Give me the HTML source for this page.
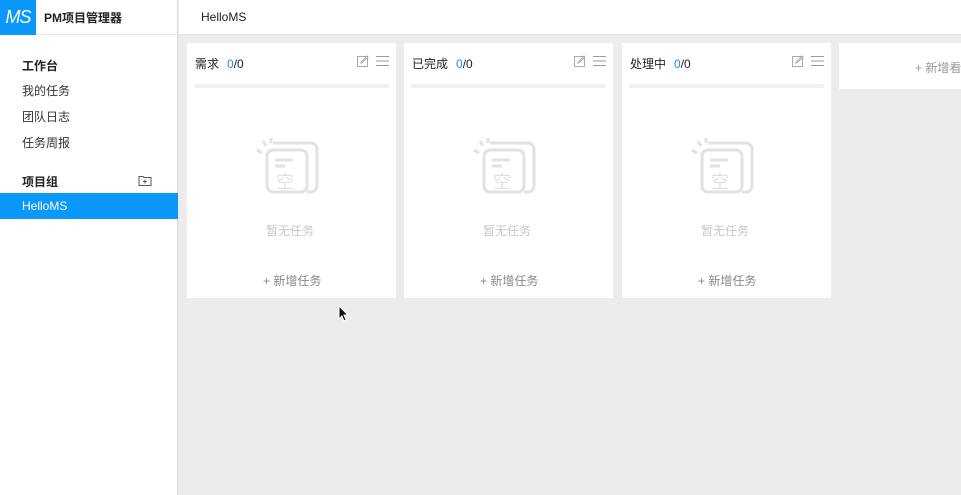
<!DOCTYPE html><html><head><meta charset="utf-8"><style>
*{margin:0;padding:0;box-sizing:border-box}
body{width:961px;height:495px;overflow:hidden;font-family:"Liberation Sans","Noto Sans CJK SC",sans-serif;background:#ececec;position:relative;font-size:12px;color:#333}
.side{position:absolute;left:0;top:0;width:178px;height:495px;background:#fff;border-right:1px solid #ddd}
.logo{position:absolute;left:0;top:0;width:36px;height:35px;background:#0a98fa;color:#fff;font-style:italic;font-size:18px;text-align:center;line-height:35px;letter-spacing:-1px}
.title{position:absolute;left:44px;top:9px;font-weight:bold;font-size:12px;color:#222}
.hdrline{position:absolute;left:36px;top:34px;width:142px;height:1px;background:#e8e8e8}
.top{position:absolute;left:179px;top:0;right:0;height:35px;background:#fff;border-bottom:1px solid #e4e4e4}
.top span{position:absolute;left:22px;top:10px;font-size:12px;color:#222}
.item{position:absolute;left:22px;font-size:12px;color:#333}
.b{font-weight:bold;color:#222}
.sel{position:absolute;left:0;top:193px;width:178px;height:26px;background:#0a98fa;color:#fff;padding-left:22px;line-height:26px}
.col{position:absolute;top:43px;width:209px;height:255px;background:#fff}
.col .h{position:absolute;left:8px;top:12px;font-size:12px;color:#222}
.col .h i{font-style:normal;color:#1a90f0;margin-left:8px}
.bar{position:absolute;left:7px;top:41px;width:195px;height:4px;border-radius:2px;background:#eef0f5}
.empty{position:absolute;left:79px;top:179px;color:#c8c8c8;font-size:12px}
.add{position:absolute;left:76px;top:229px;color:#888;font-size:12px}
.ic{position:absolute;top:12px}
</style></head><body>
<div class="side">
<div class="logo">MS</div><div class="title">PM项目管理器</div><div class="hdrline"></div>
<div class="item b" style="top:57px">工作台</div>
<div class="item" style="top:82px">我的任务</div>
<div class="item" style="top:108px">团队日志</div>
<div class="item" style="top:134px">任务周报</div>
<div class="item b" style="top:173px">项目组</div>
<svg style="position:absolute;left:138px;top:175px" width="14" height="12" viewBox="0 0 14 12"><path d="M1 1.5h4l1 1h7v8H1z" fill="none" stroke="#555"/><path d="M7 4.5v4M5 6.5h4" stroke="#555"/></svg>
<div class="sel">HelloMS</div>
</div>
<div class="top"><span>HelloMS</span></div>

<div class="col" style="left:187px"><div class="h">需求<i>0</i>/0</div>
<svg class="ic" style="left:170px" width="12" height="12"><rect x="0.5" y="1.5" width="10" height="10" fill="none" stroke="#aaa"/><path d="M4 8l1-2 5-5 1 1-5 5z" fill="none" stroke="#aaa"/></svg>
<svg class="ic" style="left:189px" width="13" height="12"><path d="M0 1.5h13M0 6h13M0 10.5h13" stroke="#999"/></svg>
<div class="bar"></div>
<svg style="position:absolute;left:66px;top:92px" width="70" height="60" viewBox="0 0 70 60"><g fill="none" stroke="#e2e2e2" stroke-width="3"><path d="M20 8h38a6 6 0 0 1 6 6v37a6 6 0 0 1-6 6h-4"/><rect x="14" y="15" width="40" height="42" rx="6"/><path d="M22 25h18M22 31h10M4 15l5 3M10 6l3 5M18 3v5"/></g><text x="23" y="53" font-size="18" fill="#e2e2e2" font-family="Noto Sans CJK SC">空</text></svg>
<div class="empty">暂无任务</div><div class="add">+ 新增任务</div></div>

<div class="col" style="left:404px"><div class="h">已完成<i>0</i>/0</div>
<svg class="ic" style="left:170px" width="12" height="12"><rect x="0.5" y="1.5" width="10" height="10" fill="none" stroke="#aaa"/><path d="M4 8l1-2 5-5 1 1-5 5z" fill="none" stroke="#aaa"/></svg>
<svg class="ic" style="left:189px" width="13" height="12"><path d="M0 1.5h13M0 6h13M0 10.5h13" stroke="#999"/></svg>
<div class="bar"></div>
<svg style="position:absolute;left:66px;top:92px" width="70" height="60" viewBox="0 0 70 60"><g fill="none" stroke="#e2e2e2" stroke-width="3"><path d="M20 8h38a6 6 0 0 1 6 6v37a6 6 0 0 1-6 6h-4"/><rect x="14" y="15" width="40" height="42" rx="6"/><path d="M22 25h18M22 31h10M4 15l5 3M10 6l3 5M18 3v5"/></g><text x="23" y="53" font-size="18" fill="#e2e2e2" font-family="Noto Sans CJK SC">空</text></svg>
<div class="empty">暂无任务</div><div class="add">+ 新增任务</div></div>

<div class="col" style="left:622px"><div class="h">处理中<i>0</i>/0</div>
<svg class="ic" style="left:170px" width="12" height="12"><rect x="0.5" y="1.5" width="10" height="10" fill="none" stroke="#aaa"/><path d="M4 8l1-2 5-5 1 1-5 5z" fill="none" stroke="#aaa"/></svg>
<svg class="ic" style="left:189px" width="13" height="12"><path d="M0 1.5h13M0 6h13M0 10.5h13" stroke="#999"/></svg>
<div class="bar"></div>
<svg style="position:absolute;left:66px;top:92px" width="70" height="60" viewBox="0 0 70 60"><g fill="none" stroke="#e2e2e2" stroke-width="3"><path d="M20 8h38a6 6 0 0 1 6 6v37a6 6 0 0 1-6 6h-4"/><rect x="14" y="15" width="40" height="42" rx="6"/><path d="M22 25h18M22 31h10M4 15l5 3M10 6l3 5M18 3v5"/></g><text x="23" y="53" font-size="18" fill="#e2e2e2" font-family="Noto Sans CJK SC">空</text></svg>
<div class="empty">暂无任务</div><div class="add">+ 新增任务</div></div>

<div style="position:absolute;left:839px;top:43px;width:130px;height:46px;background:#fff;overflow:hidden"><div style="position:absolute;left:76px;top:16px;color:#999;white-space:nowrap">+ 新增看板</div></div>
<svg style="position:absolute;left:338px;top:305px" width="12" height="18"><path d="M1 1v13l3-3 2 5 2-1-2-5h4z" fill="#111" stroke="#fff" stroke-width="1"/></svg>
</body></html>
